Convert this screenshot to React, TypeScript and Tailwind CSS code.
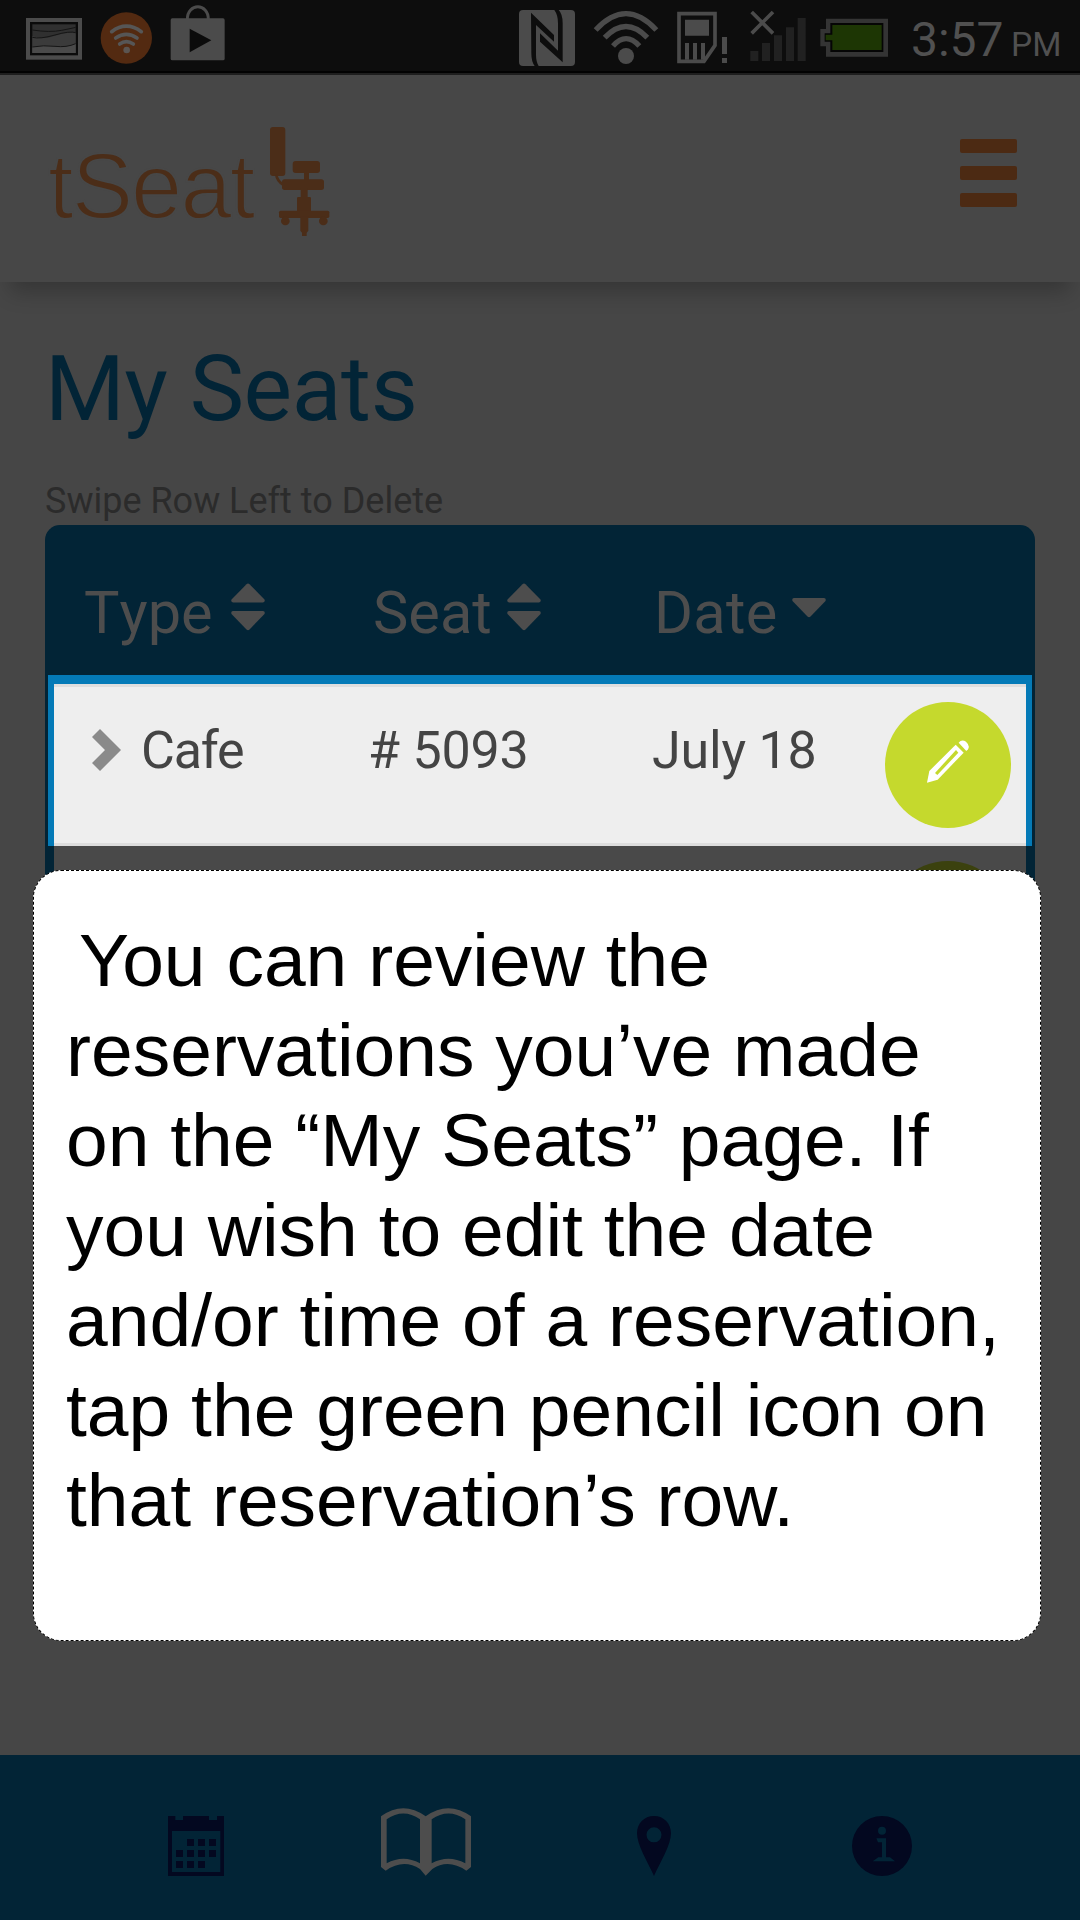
import React from "react";

function StatusBar() {
  return (
    <div className="relative h-[75px] shrink-0 border-b-2 border-[#1e1e1e] bg-[#0d0d0d] shadow-[inset_0_-2px_0_#020202]">
      <svg className="absolute top-0 left-0" width="300" height="75" viewBox="0 0 900 225">
        <rect x="78" y="54" width="168" height="125" fill="#4b4b4b" />
        <rect x="90" y="66" width="144" height="100" fill="#0b0b0b" />
        <rect x="97" y="73" width="130" height="86" fill="#303030" />
        <path d="M97 108 Q130 120 165 107 T227 100 V159 H97Z" fill="#3b3b3b" />
        <path d="M97 141 Q130 135 165 139 T227 131 V159 H97Z" fill="#4a4a4a" />
        <path d="M97 90 Q150 98 185 91 T227 82 M97 112 Q120 118 165 105 T227 98 M97 141 Q130 135 165 139 T227 131" fill="none" stroke="#151515" strokeWidth="3" />
        <circle cx="379" cy="114" r="77" fill="#532a11" />
        <g fill="none" stroke="#565656" strokeWidth="11" strokeLinecap="round">
          <path d="M335 95 Q379 62 424 95" />
          <path d="M347 114 Q379 92 411 114" />
          <path d="M359 132 Q379 118 400 132" />
        </g>
        <circle cx="380" cy="150" r="10" fill="#5b5551" />
        <path d="M562 58 C562 8 625 8 625 58" fill="none" stroke="#4b4b4b" strokeWidth="9" />
        <rect x="512" y="55" width="162" height="126" rx="5" fill="#4b4b4b" />
        <path d="M569 86 L634 121 L569 157Z" fill="#0b0b0b" />
      </svg>
      <svg className="absolute top-0 left-[500px]" width="410" height="75" viewBox="0 0 1230 225">
        <rect x="57" y="30" width="168" height="168" rx="12" fill="#4b4b4b" />
        <g fill="#0d0d0d">
          <path d="M93 38 L162 105 V125 L108 75 V165 Q108 185 116 198 H104 Q94 185 94 160Z" />
          <path d="M120 100 L174 152 V70 Q174 45 163 30 H176 Q188 42 188 70 V187 L120 125Z" />
        </g>
        <g fill="none" stroke="#4b4b4b" strokeWidth="16">
          <path d="M287 90 Q378 -8 469 90" />
          <path d="M314 113 Q378 46 442 113" />
          <path d="M339 138 Q378 94 418 138" />
        </g>
        <circle cx="378" cy="168" r="24" fill="#4b4b4b" />
        <path d="M537 41 H645 V136 L612 184 H537Z" fill="none" stroke="#4b4b4b" strokeWidth="11" />
        <path d="M555 59h72v48h-72zM555 129h12v50h-12zM579 129h12v50h-12zM603 129h12v50h-12zM666 111h15v51h-15zM666 174h15v15h-15z" fill="#4b4b4b" />
        <path d="M755 36 L819 100 M819 36 L755 100" stroke="#4b4b4b" strokeWidth="11" />
        <path d="M751 153h24v30h-24zM786 129h24v54h-24zM822 106h24v77h-24zM858 82h24v101h-24zM893 54h24v129h-24z" fill="#212121" />
        <path d="M978 56H1164V170H978V139H961V87H978Z" fill="#343434" />
        <path d="M991 69H1150V156H991V125H974V100H991Z" fill="#050505" />
        <path d="M997 75H1145V150H997V121H977V104H997Z" fill="#1d3604" />
      </svg>
      <div className="absolute top-0 left-[911px] flex items-baseline font-[Roboto] leading-[80px] text-[#505050]">
        <span className="w-[100px] text-[48px]">3:57</span>
        <span className="text-[33.5px]">PM</span>
      </div>
    </div>
  );
}

function Logo() {
  return (
    <div className="flex items-start text-[#4b2d18]">
      <span className="w-[222px] pt-[6px] text-[92px] leading-[106px] tracking-[-1.9px] font-['Liberation_Sans',sans-serif] [-webkit-text-stroke:2px_#474747]">tSeat</span>
      <svg width="60" height="110" viewBox="720 51 180 330" fill="currentColor">
        <rect x="720" y="51" width="46" height="147" rx="9" />
        <path d="M739 195 Q741 213 762 226" fill="none" stroke="currentColor" strokeWidth="8" />
        <rect x="788" y="153" width="82" height="36" rx="9" />
        <rect x="822" y="185" width="15" height="28" />
        <rect x="756" y="208" width="126" height="32" rx="8" />
        <rect x="812" y="236" width="21" height="30" />
        <rect x="801" y="261" width="42" height="45" rx="4" />
        <rect x="747" y="302" width="151" height="22" rx="5" />
        <circle cx="766" cy="333" r="13" />
        <circle cx="880" cy="333" r="13" />
        <path d="M811 320H835V362L830 368V378H816V368L811 362Z" />
      </svg>
    </div>
  );
}

function SortIcon({ up = true }: { up?: boolean }) {
  return (
    <svg width="34" height="48" viewBox="0 0 34 48" fill="#4d4d4d">
      {up && <path d="M15.5 1.2Q17 0 18.5 1.2L33.5 16.5Q34.5 19 32 19.5H2Q-.5 19 .5 16.5Z" />}
      <path
        d="M2 28H32Q34.5 28.5 33.500 31L18.500 46.500Q17 48 15.500 46.500L.5 31Q-.5 28.500 2 28Z"
        transform={up ? undefined : "translate(0 -13)"}
      />
    </svg>
  );
}

function EditButton() {
  return (
    <div className="flex h-[126px] w-[126px] items-center justify-center rounded-full bg-[#c5d92d]">
      <svg width="42" height="43" viewBox="0 0 126 129" className="-mt-[8px]">
        <path d="M0 128 L7 93 L86 14 L110 38 L32 119Z" fill="#fff" />
        <path d="M24 99 L87 30 L94 38 L31 105Z" fill="#c5d92d" />
        <path d="M95 8 Q104 -3 117 5 Q130 17 123 28 L118 33Z" fill="#fff" />
      </svg>
    </div>
  );
}

function SeatsTable() {
  return (
    <div className="mx-[45px] h-[400px] rounded-t-[15px] bg-[#022436] px-[3px] font-[Roboto]">
      <div className="grid h-[150px] grid-cols-[290px_284px_1fr] pt-[58px] pl-[36px] text-[59.5px] leading-[60px] text-[#4d4d4d]">
        <div className="flex">
          <span className="w-[147px] [font-kerning:none]">Type</span>
          <SortIcon />
        </div>
        <div className="flex">
          <span className="-ml-[1px] w-[134px]">Seat</span>
          <SortIcon />
        </div>
        <div className="flex">
          <span className="-ml-[4px] w-[138px] tracking-[0.3px]">Date</span>
          <SortIcon up={false} />
        </div>
      </div>
      <div className="h-[171px] border-x-[6px] border-t-[9px] border-[#047ab7]">
        <div className="flex h-[162px] border-y-[3px] border-y-[#dedede] bg-[#eee] pt-[15px] text-[52px] leading-[98px] text-[#444]">
          <svg className="mt-[27px] ml-[38px]" width="29" height="42" viewBox="0 0 29 42">
            <path d="M0 8 L8 0 L29 21 L8 42 L0 34 L13 21Z" fill="#8a8a8a" />
          </svg>
          <span className="ml-[20px] w-[227px] tracking-[-1.2px]">Cafe</span>
          <span className="w-[284px] tracking-[-0.2px]"># 5093</span>
          <span className="w-[233px] tracking-[-0.2px]">July 18</span>
          <EditButton />
        </div>
      </div>
      <div className="mx-[6px] h-[79px] bg-[#494949] pt-[15px]">
        <div className="ml-[831px] h-[64px] w-[126px] rounded-t-full bg-[#3b410e]" />
      </div>
    </div>
  );
}

function BottomNav() {
  return (
    <nav className="flex h-[165px] shrink-0 items-start bg-[#022436] pt-[53px] text-[#030820]">
      <svg className="mt-[8px] ml-[168px]" width="56" height="60" viewBox="84 228 168 180" fill="currentColor">
        <path fillRule="evenodd" d="M84 228H106V240H129V228H207V240H231V228H252V408H84ZM96 273V396H241V273Z" />
        <path d="M141 297h21v21h-21zM174 297h21v21h-21zM207 297h21v21h-21zM108 330h21v21h-21zM141 330h21v21h-21zM174 330h21v21h-21zM207 330h21v21h-21zM108 363h21v21h-21zM141 363h21v21h-21zM174 363h21v21h-21z" />
      </svg>
      <svg className="ml-[157px]" width="90" height="68" viewBox="723 203 270 204" fill="#4d4d4d">
        <path fillRule="evenodd" d="M723 228Q790 180 857 228Q925 180 993 228V380L979 391Q925 354 877 386L857 406L840 386Q790 354 737 391L723 380ZM740 237V369Q790 342 840 369V237Q790 202 740 237ZM875 237V369Q925 342 976 369V237Q925 202 875 237Z" />
      </svg>
      <svg className="mt-[8px] ml-[166px]" width="34" height="60" viewBox="111 227 102 180">
        <path fill="currentColor" fillRule="evenodd" d="M162 227C192 227 213 250 213 279C213 314 182 363 162 407C142 363 111 314 111 279C111 250 132 227 162 227ZM162 261A22.500 22.500 0 1 0 162 306A22.500 22.500 0 1 0 162 261Z" />
      </svg>
      <svg className="mt-[8px] ml-[181px]" width="60" height="60" viewBox="756 227 180 180">
        <circle cx="846" cy="317" r="90" fill="currentColor" />
        <circle cx="846" cy="271" r="12" fill="#022436" />
        <path d="M829 294H858V351H870L885 363H818L835 351H846V306H834Z" fill="#022436" />
      </svg>
    </nav>
  );
}

export default function App() {
  return (
    <div className="relative flex h-[1920px] w-[1080px] flex-col overflow-hidden bg-[#464646]">
      <StatusBar />
      <header className="flex h-[207px] shrink-0 items-start justify-between bg-[#474747] pt-[52px] pr-[63px] pl-[48px] shadow-[0_20px_20px_-10px_rgba(0,0,0,0.23)]">
        <Logo />
        <div className="mt-[12px] flex flex-col gap-[13px]">
          <div className="h-[14px] w-[57px] rounded-[2px] bg-[#4c2a13]" />
          <div className="h-[14px] w-[57px] rounded-[2px] bg-[#4c2a13]" />
          <div className="h-[14px] w-[57px] rounded-[2px] bg-[#4c2a13]" />
        </div>
      </header>
      <main className="flex-1 pt-[30px]">
        <h1 className="h-[160px] pt-[23px] pl-[45px] font-[Roboto] text-[91.5px] leading-[108px] tracking-[-0.4px] text-[#022436]">My Seats</h1>
        <p className="h-[53px] pl-[45px] font-[Roboto] text-[36px] leading-[58px] text-[#2b2b2b]">Swipe Row Left to Delete</p>
        <SeatsTable />
      </main>
      <BottomNav />
      <div className="absolute top-[870px] left-[33px] h-[771px] w-[1008px] rounded-[28px] border border-dashed border-black bg-white pt-[44px] pl-[32px] font-['Liberation_Sans',sans-serif] text-[75px] leading-[90px] text-black">
        <p className="whitespace-nowrap">
          <span className="pl-[13px]">You can review the</span>
          <br />reservations you’ve made
          <br />on the “My Seats” page. If
          <br />you wish to edit the date
          <br />and/or time of a reservation,
          <br />tap the green pencil icon on
          <br />that reservation’s row.
        </p>
      </div>
    </div>
  );
}
